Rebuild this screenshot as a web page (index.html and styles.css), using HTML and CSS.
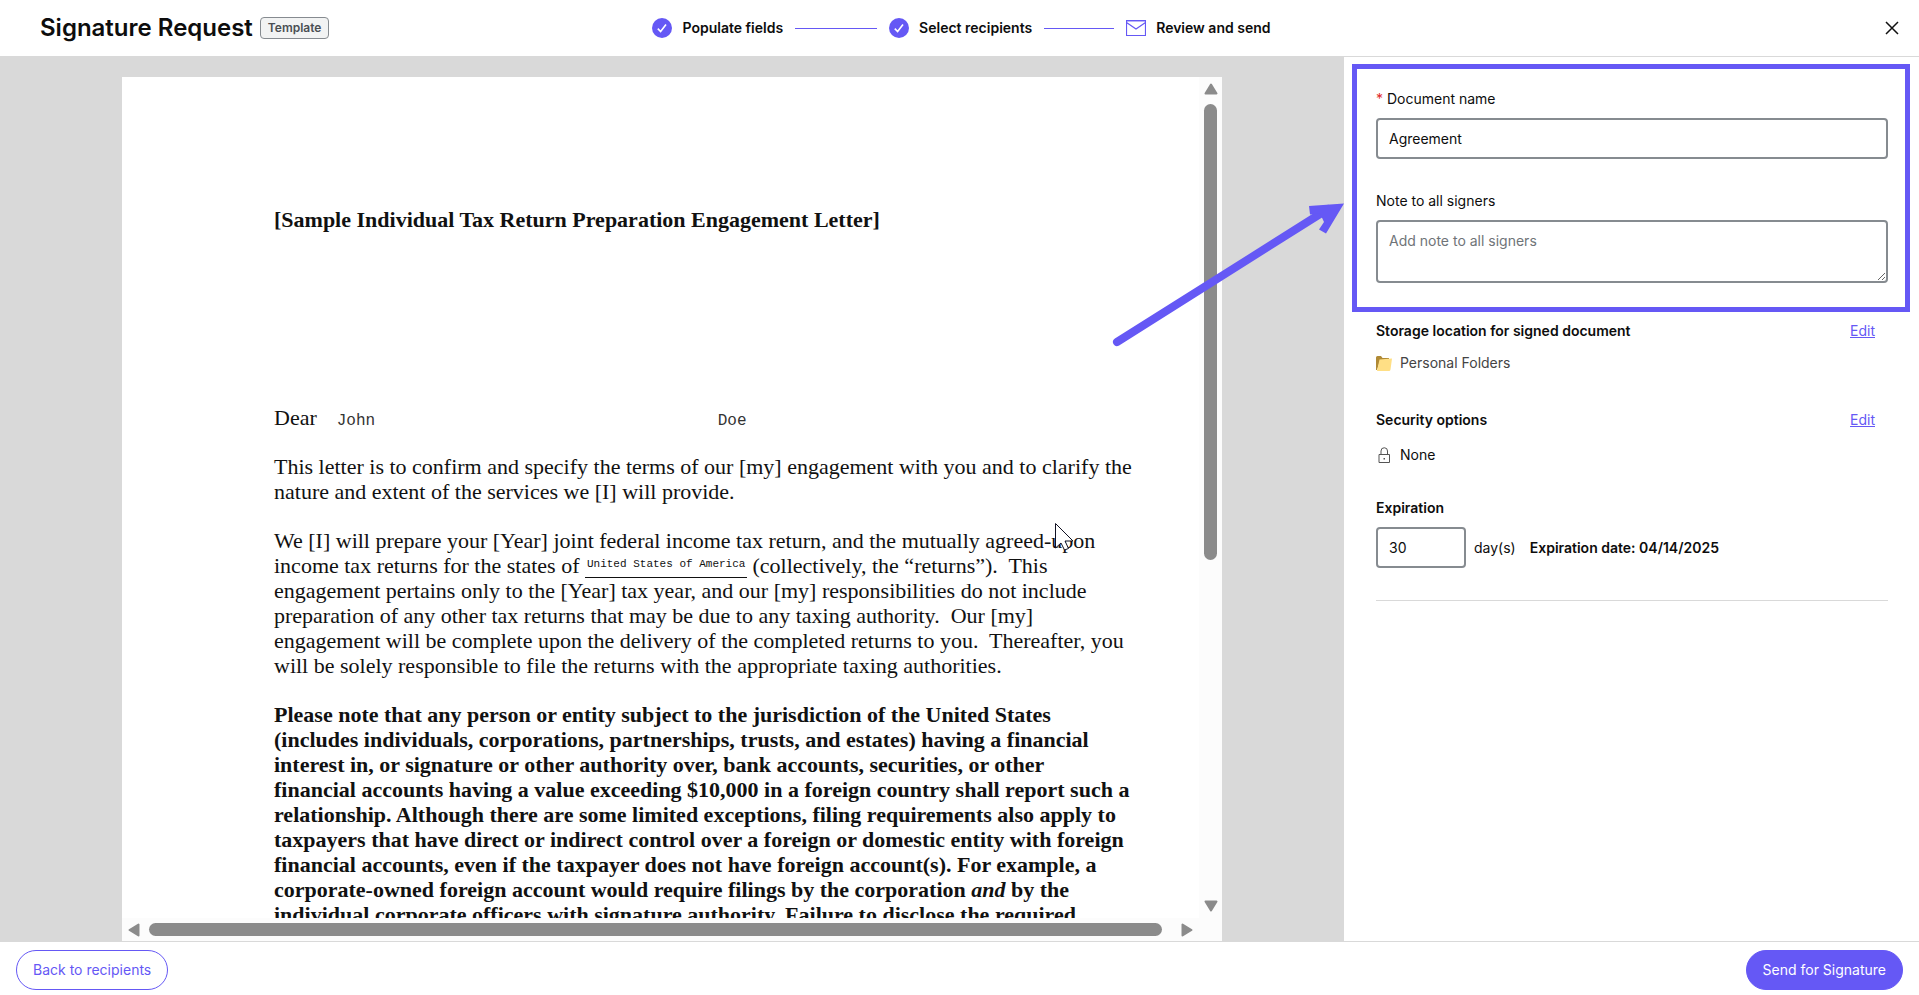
FILE: index.html
```html
<!DOCTYPE html>
<html lang="en">
<head>
<meta charset="utf-8">
<title>Signature Request</title>
<link rel="stylesheet" href="styles.css">
</head>
<body>
<header class="topbar">
  <div class="heading">
    <h1>Signature Request</h1>
    <span class="badge">Template</span>
  </div>
  <ol class="steps">
    <li class="step">
      <svg width="20" height="20" viewBox="0 0 20 20" aria-hidden="true"><circle cx="10" cy="10" r="10" fill="#6558f5"/><path d="M5.8 10.6l2.8 2.9 5.4-7" fill="none" stroke="#fff" stroke-width="1.6"/></svg>
      Populate fields
    </li>
    <li class="line" aria-hidden="true"></li>
    <li class="step">
      <svg width="20" height="20" viewBox="0 0 20 20" aria-hidden="true"><circle cx="10" cy="10" r="10" fill="#6558f5"/><path d="M5.8 10.6l2.8 2.9 5.4-7" fill="none" stroke="#fff" stroke-width="1.6"/></svg>
      Select recipients
    </li>
    <li class="line short" aria-hidden="true"></li>
    <li class="step">
      <svg width="20" height="16" viewBox="0 0 20 16" aria-hidden="true"><path d="M1 1.500h18" stroke="#b9b3fa"/><path d="M.5.5h19v15H.5zM.5 2.500l9.500 6.500 9.500-6.500" fill="none" stroke="#6558f5" stroke-width="1.200"/></svg>
      Review and send
    </li>
  </ol>
  <button class="close" type="button" aria-label="Close">
    <svg width="14" height="14" viewBox="0 0 14 14" aria-hidden="true"><path d="M1 1l12 12M13 1L1 13" stroke="#111" stroke-width="1.500"/></svg>
  </button>
</header>

<main class="workspace">
  <section class="viewer" aria-label="Document preview">
    <div class="document">
      <article class="paper">
        <h2>[Sample Individual Tax Return Preparation Engagement Letter]</h2>
        <p class="greeting"><span>Dear</span><span class="fill first">John</span><span class="fill">Doe</span></p>
        <p>This letter is to confirm and specify the terms of our [my] engagement with you and to clarify the<br>
        nature and extent of the services we [I] will provide.</p>
        <p>We [I] will prepare your [Year] joint federal income tax return, and the mutually agreed-upon<br>
        income tax returns for the states of <span class="blank">United States of America</span> (collectively, the “returns”).&nbsp; This<br>
        engagement pertains only to the [Year] tax year, and our [my] responsibilities do not include<br>
        preparation of any other tax returns that may be due to any taxing authority.&nbsp; Our [my]<br>
        engagement will be complete upon the delivery of the completed returns to you.&nbsp; Thereafter, you<br>
        will be solely responsible to file the returns with the appropriate taxing authorities.</p>
        <p class="strong">Please note that any person or entity subject to the jurisdiction of the United States<br>
        (includes individuals, corporations, partnerships, trusts, and estates) having a financial<br>
        interest in, or signature or other authority over, bank accounts, securities, or other<br>
        financial accounts having a value exceeding $10,000 in a foreign country shall report such a<br>
        relationship. Although there are some limited exceptions, filing requirements also apply to<br>
        taxpayers that have direct or indirect control over a foreign or domestic entity with foreign<br>
        financial accounts, even if the taxpayer does not have foreign account(s). For example, a<br>
        corporate-owned foreign account would require filings by the corporation <em>and</em> by the<br>
        individual corporate officers with signature authority. Failure to disclose the required</p>
      </article>
      <div class="scroll vertical">
        <svg width="14" height="12" viewBox="0 0 14 12" aria-hidden="true"><path d="M7 1.500L12.500 10.500h-11z" fill="#8b8b8b" stroke="#8b8b8b" stroke-width="2" stroke-linejoin="round"/></svg>
        <div class="track"><div class="thumb"></div></div>
        <svg width="14" height="12" viewBox="0 0 14 12" aria-hidden="true"><path d="M7 10.500L12.500 1.500h-11z" fill="#8b8b8b" stroke="#8b8b8b" stroke-width="2" stroke-linejoin="round"/></svg>
      </div>
      <div class="scroll horizontal">
        <svg width="12" height="14" viewBox="0 0 12 14" aria-hidden="true"><path d="M1.500 7L10.500 1.500v11z" fill="#8b8b8b" stroke="#8b8b8b" stroke-width="2" stroke-linejoin="round"/></svg>
        <div class="track"><div class="thumb"></div></div>
        <svg width="12" height="14" viewBox="0 0 12 14" aria-hidden="true"><path d="M10.500 7L1.500 1.500v11z" fill="#8b8b8b" stroke="#8b8b8b" stroke-width="2" stroke-linejoin="round"/></svg>
      </div>
      <svg class="pointer" width="20" height="28" viewBox="0 0 20 28" aria-hidden="true"><path d="M.5.5v24.500l5.500-5 3.500 7 4-1.500-3.500-7.500h8z" fill="#fff" stroke="#112"/></svg>
    </div>
    <svg class="arrow" width="234" height="150" viewBox="0 0 234 150" aria-hidden="true"><path d="M7 142L218 9" stroke="#6558f5" stroke-width="8" stroke-linecap="round"/><path d="M234 3.500L199 6l1 8.500 10-1 4 8.500-5 7.500 7 4z" fill="#6558f5"/></svg>
  </section>

  <aside class="panel">
    <div class="highlight">
      <div class="field">
        <label for="doc-name"><span class="required">*</span> Document name</label>
        <input id="doc-name" class="box" type="text" value="Agreement">
      </div>
      <div class="field">
        <label for="note">Note to all signers</label>
        <textarea id="note" class="box" placeholder="Add note to all signers"></textarea>
      </div>
    </div>
    <div class="settings">
      <section class="setting">
        <div class="row"><h3>Storage location for signed document</h3><a href="#storage">Edit</a></div>
        <div class="value muted">
          <svg width="16" height="15" viewBox="0 0 16 15" aria-hidden="true"><path d="M0 1.500Q0 0 1.500 0H5l1.500 2H13v4L3 8 1 14H0z" fill="#b08a35"/><path d="M3.500 3.500L16 2.500l-1.500 11q-.2 1.500-1.500 1.500H1z" fill="#ffdf85"/></svg>
          Personal Folders
        </div>
      </section>
      <section class="setting security">
        <div class="row"><h3>Security options</h3><a href="#security">Edit</a></div>
        <div class="value">
          <svg width="16" height="16" viewBox="0 0 16 16" aria-hidden="true"><path d="M3 7.500h10.500v8H3zM5 7.500V4a3.200 3.200 0 0 1 6.500 0v3.500" fill="none" stroke="#555"/><path d="M7.500 11h1.500v1.500H7.500z" fill="#555"/></svg>
          None
        </div>
      </section>
      <section class="setting expiration">
        <h3><label for="days">Expiration</label></h3>
        <div class="days">
          <input id="days" class="box" type="text" value="30">
          <span>day(s)</span>
          <strong>Expiration date: 04/14/2025</strong>
        </div>
      </section>
    </div>
  </aside>
</main>

<footer class="actions">
  <button class="pill outline" type="button">Back to recipients</button>
  <button class="pill solid" type="button">Send for Signature</button>
</footer>
</body>
</html>
```

FILE: styles.css
```css
* {
  box-sizing: border-box;
}

body {
  margin: 0;
  height: 100vh;
  display: flex;
  flex-direction: column;
  overflow: hidden;
  background: #fff;
  color: #0d0d0d;
  font: 14px/20px Inter, "Liberation Sans", sans-serif;
}

h1, h2, h3, p, ol {
  margin: 0;
  padding: 0;
}

button, input, textarea {
  font: inherit;
  color: inherit;
}

.topbar {
  display: grid;
  grid-template-columns: 1fr auto 1fr;
  align-items: center;
  height: 57px;
  padding: 0 20px 0 24px;
  border-bottom: 1px solid #d9d9d9;
}

.heading {
  display: flex;
  align-items: center;
  gap: 7px;
  padding-left: 16px;
}

h1 {
  font-size: 24px;
  line-height: 32px;
  font-weight: 600;
}

.badge {
  padding: 0 7px;
  border: 1px solid #868b90;
  border-radius: 4px;
  background: #f2f3f3;
  color: #4a4f54;
  font-size: 12px;
  font-weight: 600;
}

.steps {
  display: flex;
  align-items: center;
  gap: 12px;
  list-style: none;
  font-weight: 600;
}

.step {
  display: flex;
  align-items: center;
  gap: 10px;
}

.line {
  width: 82px;
  height: 1px;
  background: #6558f5;
}

.line.short {
  width: 70px;
}

.close {
  justify-self: end;
  display: flex;
  padding: 0;
  border: 0;
  background: none;
}

.workspace {
  flex: 1;
  min-height: 0;
  display: grid;
  grid-template-columns: minmax(0, 1fr) 575px;
}

.viewer {
  position: relative;
  min-width: 0;
  min-height: 0;
  display: flex;
  justify-content: center;
  padding-top: 20px;
  background: #d9d9d9;
}

.document {
  position: relative;
  width: 82%;
  max-width: 1100px;
  min-height: 0;
  display: grid;
  grid-template: minmax(0, 1fr) 23px / minmax(0, 1fr) 23px;
  background: #fcfcfc;
}

.paper {
  overflow: hidden;
  padding: 130px 0 0 152px;
  background: #fff;
  color: #111;
  font: 22px/25px "Liberation Serif", serif;
  white-space: nowrap;
}

.paper h2 {
  margin-bottom: 173px;
  font-size: 22px;
  line-height: 25px;
}

.paper p {
  margin-bottom: 24px;
}

.greeting {
  display: flex;
  align-items: flex-end;
}

.fill {
  color: #333;
  font: 16px/18px "Liberation Mono", monospace;
}

.first {
  width: 381px;
  margin-left: 20px;
}

.blank {
  display: inline-block;
  width: 162px;
  padding: 0 0 7px 2px;
  border-bottom: 1px solid #111;
  vertical-align: 6px;
  font: 11px/12px "Liberation Mono", monospace;
}

.strong {
  font-weight: 700;
}

.scroll {
  display: flex;
  align-items: center;
  gap: 9px;
}

.vertical {
  flex-direction: column;
  padding: 6px 0;
}

.horizontal {
  padding: 0 6px;
}

.track {
  flex: 1;
}

.thumb {
  border-radius: 7px;
  background: #8b8b8b;
}

.vertical .thumb {
  width: 13px;
  height: 58%;
}

.horizontal .thumb {
  width: 99%;
  height: 13px;
}

.pointer {
  position: absolute;
  left: 933px;
  top: 446px;
}

.arrow {
  position: absolute;
  right: 0;
  top: 143px;
}

.panel {
  padding: 7px 9px 0 8px;
}

.highlight {
  display: flex;
  flex-direction: column;
  gap: 32px;
  padding: 20px 17px 24px 19px;
  border: 5px solid #6558f5;
}

.field {
  display: flex;
  flex-direction: column;
  gap: 9px;
}

.required {
  color: #e02b2b;
}

.box {
  height: 41px;
  padding: 0 11px;
  border: 2px solid #868b90;
  border-radius: 4px;
  background: #fff;
}

textarea.box {
  height: 63px;
  padding: 9px 11px;
}

.box::placeholder {
  color: #6f7478;
  opacity: 1;
}

.settings {
  margin: 9px 22px 0 24px;
  border-bottom: 1px solid #d9d9d9;
}

.setting {
  padding-bottom: 37px;
}

.row {
  display: flex;
  justify-content: space-between;
  padding-right: 13px;
}

h3 {
  font-size: 14px;
  line-height: 20px;
  font-weight: 600;
}

a {
  color: #6558f5;
}

.value {
  display: flex;
  align-items: center;
  gap: 8px;
  padding-top: 12px;
}

.muted {
  color: #444;
}

.security {
  padding-bottom: 33px;
}

.security .value {
  padding-top: 15px;
}

.expiration {
  padding-bottom: 32px;
}

.days {
  display: flex;
  align-items: center;
  gap: 8px;
  padding-top: 9px;
}

.days .box {
  width: 90px;
}

.days strong {
  margin-left: 6px;
  font-weight: 600;
}

.actions {
  display: flex;
  justify-content: space-between;
  align-items: center;
  height: 54px;
  padding: 2px 16px 0;
  border-top: 1px solid #d9d9d9;
}

.pill {
  height: 40px;
  padding: 0 16px;
  border: 1px solid #6558f5;
  border-radius: 20px;
}

.outline {
  background: #fff;
  color: #6558f5;
}

.solid {
  background: #6558f5;
  color: #fff;
}
```
